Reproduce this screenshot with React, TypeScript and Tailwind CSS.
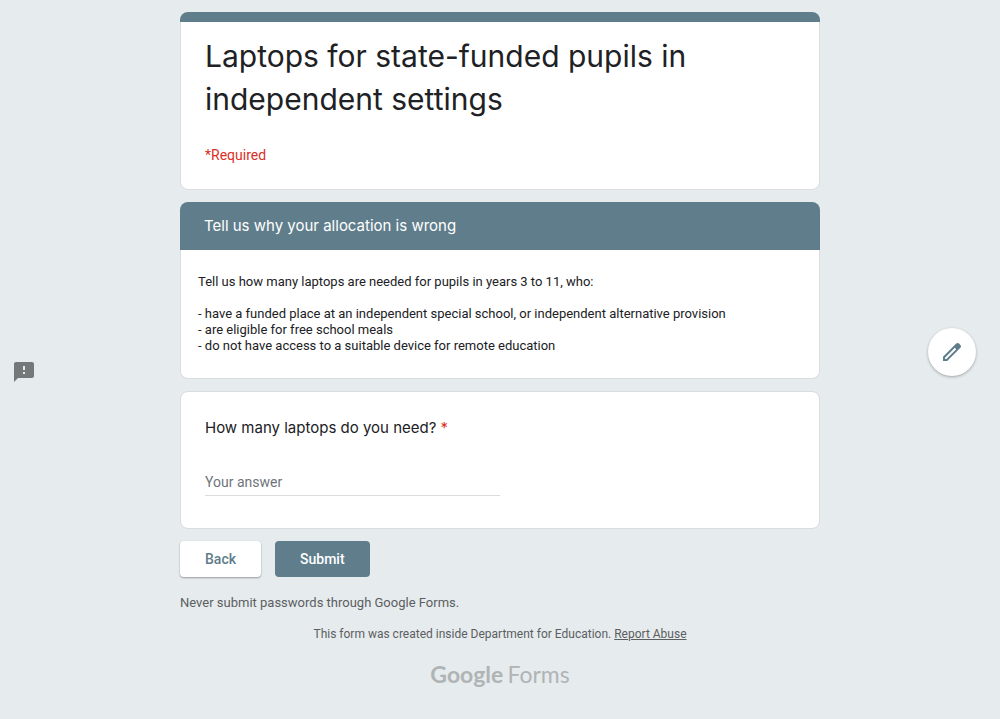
import { useState } from "react";

function PencilIcon() {
  return (
    <svg viewBox="0 0 24 24" className="size-6 fill-[#607d8b]" aria-hidden="true">
      <path d="M20.41 4.94l-1.35-1.35c-.78-.78-2.05-.78-2.83 0L3 16.82V21h4.18L20.41 7.77c.79-.78.79-2.05 0-2.83zm-14 14.12L5 19v-1.36l9.82-9.82 1.41 1.41-9.82 9.83z" />
    </svg>
  );
}

function FeedbackIcon() {
  return (
    <svg viewBox="0 0 24 24" className="size-6 fill-[#747878]" aria-hidden="true">
      <path d="M20 2H4c-1.1 0-1.99.9-1.99 2L2 22l4-4h14c1.1 0 2-.9 2-2V4c0-1.1-.9-2-2-2zm-7 12h-2v-2h2v2zm0-4h-2V6h2v4z" />
    </svg>
  );
}

export default function App() {
  const [answer, setAnswer] = useState("");

  return (
    <div className="min-h-screen bg-[#e6ebee] px-4 py-3 font-['Roboto',sans-serif] text-[#202124]">
      <form className="mx-auto max-w-160" onSubmit={(e) => e.preventDefault()}>
        <div className="flex flex-col gap-3">
          <header>
            <div className="h-2.5 rounded-t-lg bg-[#607d8b]" />
            <div className="rounded-b-lg border border-t-0 border-[#dadce0] bg-white px-6 pt-[13px] pb-[23px]">
              <h1 className="font-['Inter',sans-serif] text-[30px] leading-[43px]">
                Laptops for state-funded pupils in independent settings
              </h1>
              <p className="mt-6 text-sm leading-[21px] text-[#d93025]">*Required</p>
            </div>
          </header>

          <section>
            <h2 className="rounded-t-lg bg-[#607d8b] px-6 py-3 font-['Inter',sans-serif] text-[15px] leading-6 text-white">
              Tell us why your allocation is wrong
            </h2>
            <div className="rounded-b-lg border border-t-0 border-[#dadce0] bg-white px-[17px] py-6 text-[13px] leading-4">
              <p>Tell us how many laptops are needed for pupils in years 3 to 11, who:</p>
              <p className="mt-4">
                - have a funded place at an independent special school, or independent alternative provision
              </p>
              <p>- are eligible for free school meals</p>
              <p>- do not have access to a suitable device for remote education</p>
            </div>
          </section>

          <section className="rounded-lg border border-[#dadce0] bg-white px-6 pt-6 pb-8">
            <label htmlFor="laptops" className="block font-['Inter',sans-serif] text-[15px] leading-6">
              How many laptops do you need? <span className="text-[#d93025]">*</span>
            </label>
            <input
              id="laptops"
              type="text"
              required
              value={answer}
              onChange={(e) => setAnswer(e.target.value)}
              placeholder="Your answer"
              className="mt-7 block h-7 w-1/2 border-b border-[#dadce0] text-sm outline-none placeholder:text-[#70757a]"
            />
          </section>
        </div>

        <div className="mt-3 flex gap-3.5 text-sm font-medium">
          <button type="button" className="h-9 rounded bg-white px-[25px] text-[#607d8b] shadow-[0_1px_2px_rgba(0,0,0,0.35)]">
            Back
          </button>
          <button type="submit" className="h-9 rounded bg-[#607d8b] px-[25px] text-white">
            Submit
          </button>
        </div>
        <p className="mt-[18px] text-[13px] leading-4 text-[#5c5e5f]">Never submit passwords through Google Forms.</p>
      </form>

      <footer className="mt-[15px] text-center text-[#5c5e5f]">
        <p className="text-xs leading-4">
          This form was created inside Department for Education.{" "}
          <a href="#report" className="underline">
            Report Abuse
          </a>
        </p>
        <a
          href="#forms"
          className="mt-4 inline-flex gap-1 font-['Lato',sans-serif] text-[23px] leading-8 text-[#b0b4b5]"
        >
          <span className="font-bold">Google</span>
          <span>Forms</span>
        </a>
      </footer>

      <button type="button" aria-label="Report a problem" className="fixed bottom-[335px] left-3">
        <FeedbackIcon />
      </button>
      <button
        type="button"
        aria-label="Edit this form"
        className="fixed right-6 bottom-[343px] flex size-12 items-center justify-center rounded-full bg-white shadow-[0_1px_3px_rgba(0,0,0,0.3)]"
      >
        <PencilIcon />
      </button>
    </div>
  );
}
